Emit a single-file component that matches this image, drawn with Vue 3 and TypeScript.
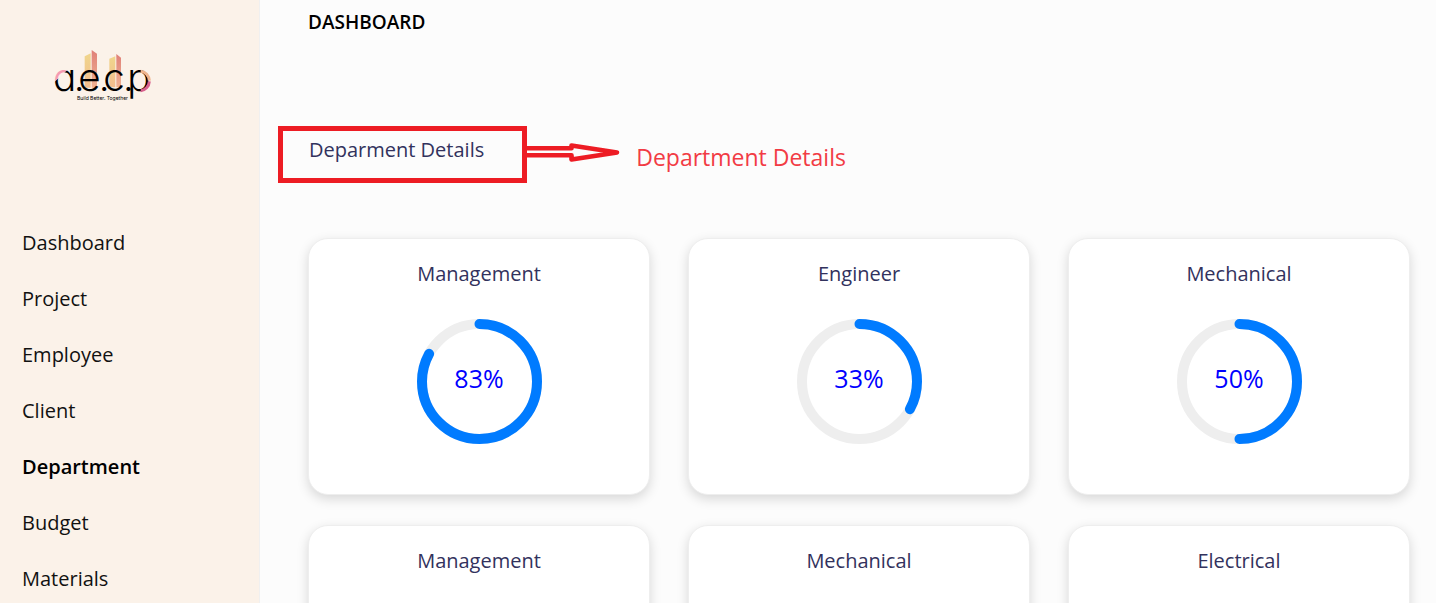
<script setup lang="ts">
interface NavItem {
  label: string
  active?: boolean
}

interface Department {
  id: number
  name: string
  percent: number
}

const navItems: NavItem[] = [
  { label: 'Dashboard' },
  { label: 'Project' },
  { label: 'Employee' },
  { label: 'Client' },
  { label: 'Department', active: true },
  { label: 'Budget' },
  { label: 'Materials' },
]

const departments: Department[] = [
  { id: 1, name: 'Management', percent: 83 },
  { id: 2, name: 'Engineer', percent: 33 },
  { id: 3, name: 'Mechanical', percent: 50 },
  { id: 4, name: 'Management', percent: 83 },
  { id: 5, name: 'Mechanical', percent: 50 },
  { id: 6, name: 'Electrical', percent: 33 },
]
</script>

<template>
  <div class="layout">
    <aside class="sidebar">
      <svg class="logo" viewBox="0 0 390 210" role="img" aria-label="a.e.c.p Build Better. Together">
        <defs>
          <linearGradient id="gold" x1="0" y1="0" x2="0" y2="1">
            <stop offset="0" stop-color="#f0d68c" />
            <stop offset="1" stop-color="#f3bd8d" />
          </linearGradient>
          <linearGradient id="coral" x1="0" y1="0" x2="0" y2="1">
            <stop offset="0" stop-color="#e08078" />
            <stop offset="1" stop-color="#efb292" />
          </linearGradient>
          <linearGradient id="first" gradientUnits="userSpaceOnUse" x1="46" y1="92" x2="92" y2="142">
            <stop offset="0" stop-color="#f590b4" />
            <stop offset="0.32" stop-color="#f5a0b0" />
            <stop offset="0.36" stop-color="#000" />
          </linearGradient>
        </defs>
        <path d="M134 49 L152 40 V143 H134 Z" fill="url(#gold)" />
        <path d="M155 30 L171 41 V143 H155 Z" fill="url(#coral)" />
        <path d="M208 56 L226 49 V142 H208 Z" fill="url(#gold)" />
        <path d="M229 42 L243 53 V142 H229 Z" fill="url(#coral)" />
        <text class="wordmark" y="153">
          <tspan x="39" fill="url(#first)">ɑ</tspan>
          <tspan x="101">.</tspan>
          <tspan x="115">e</tspan>
          <tspan x="176">.</tspan>
          <tspan x="190">c</tspan>
          <tspan x="249">.</tspan>
          <tspan x="262">p</tspan>
        </text>
        <path class="accent" d="M302 94 A27 30 0 0 1 328 122" stroke="#f0b48c" />
        <path class="accent" d="M328 124 A27 30 0 0 1 302 152" stroke="#d8608c" />
        <text class="tagline" x="111" y="180">Build Better. Together</text>
      </svg>
      <nav class="nav" aria-label="Main">
        <a v-for="item in navItems" :key="item.label" href="#" :class="{ active: item.active }">{{ item.label }}</a>
      </nav>
    </aside>

    <main class="main">
      <h1 class="page-title">DASHBOARD</h1>

      <div class="note">
        <h2 class="note-box">Deparment Details</h2>
        <svg class="arrow" viewBox="0 0 93 23" aria-hidden="true">
          <path d="M0 5.3 H44.5 V2.6 L90 9.5 L44.5 16.4 V12.3 H0" />
        </svg>
        <span class="note-label">Department Details</span>
      </div>

      <section class="cards">
        <article v-for="dept in departments" :key="dept.id" class="card">
          <h3>{{ dept.name }}</h3>
          <div class="gauge">
            <svg viewBox="0 0 125 125" aria-hidden="true">
              <circle class="track" cx="62.5" cy="62.5" r="57.5" />
              <circle
                class="value"
                cx="62.5"
                cy="62.5"
                r="57.5"
                pathLength="100"
                :stroke-dasharray="`${dept.percent} 100`"
                transform="rotate(-90 62.5 62.5)"
              />
            </svg>
            <span>{{ dept.percent }}%</span>
          </div>
        </article>
      </section>
    </main>
  </div>
</template>

<style>
body {
  margin: 0;
  background: #fcfcfc;
  overflow: hidden;
}
</style>

<style scoped>
.layout {
  display: flex;
  height: 100vh;
  overflow: hidden;
  font-family: 'Open Sans', 'Noto Sans', sans-serif;
  font-size: 20px;
  line-height: 28px;
}

.sidebar {
  flex: none;
  box-sizing: border-box;
  width: 260px;
  padding-top: 40px;
  background: #fbf2e9;
  border-right: 1px solid #f0f0f0;
}

.logo {
  display: block;
  width: 130px;
  margin-left: 40px;
}

.wordmark {
  font-family: Inter, sans-serif;
  font-size: 116px;
  font-weight: 300;
}

.accent {
  fill: none;
  stroke-width: 9;
}

.tagline {
  font-family: Inter, sans-serif;
  font-size: 15px;
}

.nav {
  display: flex;
  flex-direction: column;
  gap: 28px;
  margin-top: 119px;
  padding-left: 22px;
}

.nav a {
  color: #111;
  text-decoration: none;
}

.nav a.active {
  color: #000;
  font-weight: 600;
}

.main {
  flex: 1;
  min-width: 0;
  padding: 8px 26px 0 18px;
}

h1,
h2,
h3 {
  margin: 0;
  font-weight: 400;
}

.page-title {
  padding-left: 30px;
  color: #000;
  font-size: 19px;
  font-weight: 600;
}

.note {
  display: flex;
  align-items: center;
  margin-top: 90px;
}

.note-box {
  padding: 5px 38px 14px 26px;
  border: 5px solid #ed1c24;
  color: #32325d;
  font-size: 20px;
}

.arrow {
  width: 93px;
  height: 23px;
}

.arrow path {
  fill: none;
  stroke: #ed1c24;
  stroke-width: 4.6;
  stroke-linejoin: round;
}

.note-label {
  margin-left: 16px;
  padding-top: 4px;
  color: #f23b44;
  font-size: 23px;
}

.cards {
  display: grid;
  grid-template-columns: repeat(3, 1fr);
  gap: 30px 38px;
  margin-top: 55px;
  padding-left: 30px;
}

.card {
  display: flex;
  flex-direction: column;
  align-items: center;
  gap: 31px;
  padding: 21px 0 50px;
  background: #fff;
  border: 1px solid #eee;
  border-radius: 20px;
  box-shadow: 0 4px 12px rgba(0, 0, 0, 0.15);
}

.card h3 {
  color: #32325d;
  font-size: 20px;
}

.gauge {
  display: grid;
  place-items: center;
}

.gauge > * {
  grid-area: 1 / 1;
}

.gauge svg {
  width: 125px;
  height: 125px;
}

.gauge circle {
  fill: none;
  stroke-width: 10;
}

.track {
  stroke: #eee;
}

.value {
  stroke: #007bff;
  stroke-linecap: round;
}

.gauge span {
  padding-bottom: 8px;
  color: #00f;
  font-size: 25px;
}
</style>
